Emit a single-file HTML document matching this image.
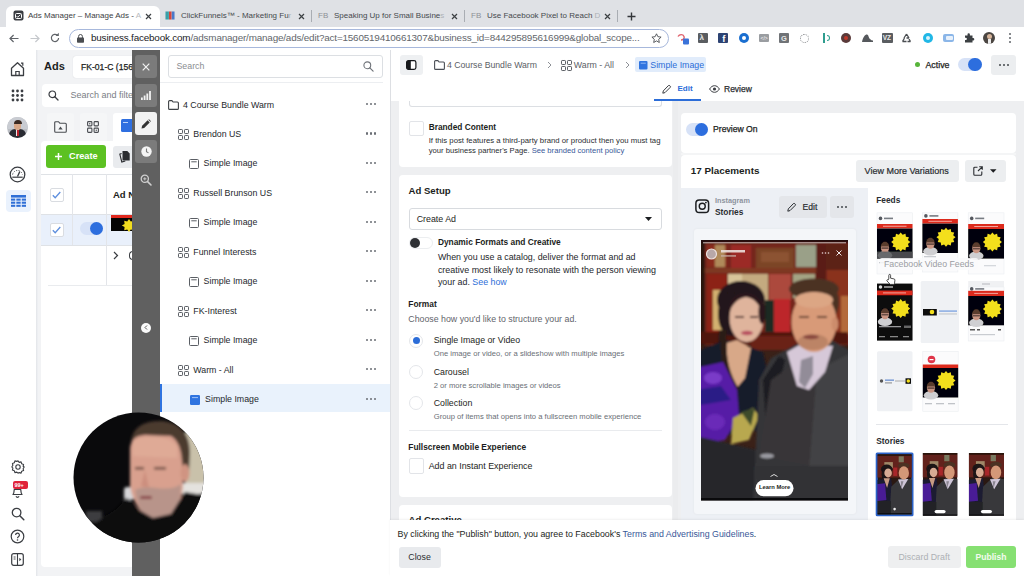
<!DOCTYPE html>
<html><head><meta charset="utf-8">
<style>
*{box-sizing:border-box;margin:0;padding:0}
html,body{width:1024px;height:576px;overflow:hidden;background:#fff}
body{font-family:"Liberation Sans",sans-serif;font-size:9px;color:#1c1e21;position:relative}
.a{position:absolute}
.t{position:absolute;white-space:nowrap;line-height:1}
.b{font-weight:bold}
svg{position:absolute;overflow:visible}
/* chrome */
#tabbar{left:0;top:0;width:1024px;height:26.500px;background:#dfe1e5}
#acttab{left:6px;top:6px;width:154px;height:22px;background:#fff;border-radius:6px 6px 0 0}
#toolbar{left:0;top:27px;width:1024px;height:23px;background:#fff}
#pill{left:69px;top:29px;width:599.500px;height:19px;border-radius:10px;background:#fff;border:1.500px solid #a7b8dc}
.tabt{font-size:8px;color:#45494d;top:12px}
.sep{width:1px;height:12px;top:10px;background:#a9adb3}
/* fb */
#leftnav{left:0;top:50px;width:36px;height:526px;background:#fff}
#adspanel{left:36px;top:50px;width:96px;height:526px;background:#f2f3f5}
#dark{left:132px;top:50px;width:28px;height:526px;background:#606060}
#tree{left:160px;top:50px;width:230px;height:526px;background:#fff}
#main{left:390px;top:50px;width:634px;height:526px;background:#eeeff1}
#mainhead{left:390px;top:50px;width:634px;height:51px;background:#fff}
.card{background:#fff;border-radius:4px}
.row{left:160px;width:230px;height:29px}
.dots{font-size:9px;letter-spacing:.5px;color:#606770;font-weight:bold}
.g{color:#606770}
.btn{background:#e4e6eb;border-radius:3px}
</style></head><body>
<!-- ===== CHROME ===== -->
<div id="tabbar" class="a"></div>
<div id="acttab" class="a"></div>
<div id="toolbar" class="a"></div>
<div id="pill" class="a"></div>
<!-- ===== FB LAYOUT ===== -->
<div id="leftnav" class="a"></div>
<div id="adspanel" class="a"></div>
<div id="tree" class="a"></div>
<div id="main" class="a"></div>
<div id="mainhead" class="a"></div>

<!-- tabs -->
<svg class="a" style="left:13px;top:10px" width="11" height="11" viewBox="0 0 11 11"><rect x="0.5" y="0.5" width="10" height="10" rx="2" fill="#3a3d42"/><rect x="2.5" y="3.5" width="6" height="5" rx="1" fill="none" stroke="#fff" stroke-width="1"/><path d="M3.5 6l1.2 1.2L7.5 4.6" stroke="#fff" stroke-width=".9" fill="none"/></svg>
<div class="t tabt" style="left:28px;color:#3c4043">Ads Manager – Manage Ads - <span style="color:#b8bbc0">A</span></div>
<svg style="left:145px;top:13px" width="7" height="7" viewBox="0 0 7 7"><path d="M1 1l5 5M6 1L1 6" stroke="#3c4043" stroke-width="1.2"/></svg>
<svg style="left:165px;top:11px" width="10" height="9" viewBox="0 0 10 9"><rect width="10" height="9" rx="1" fill="#d9dde3"/><rect x=".5" y=".5" width="3.4" height="8" fill="#3aa0a8"/><rect x="4" y=".5" width="2.6" height="8" fill="#d8453c"/><rect x="6.8" y=".5" width="2.7" height="8" fill="#4a79c9"/></svg>
<div class="t tabt" style="left:181px">ClickFunnels™ - Marketing Fu<span style="color:#aeb1b6">r</span></div>
<svg style="left:298px;top:13px" width="7" height="7" viewBox="0 0 7 7"><path d="M1 1l5 5M6 1L1 6" stroke="#3c4043" stroke-width="1.2"/></svg>
<div class="a sep" style="left:311px"></div>
<div class="t tabt" style="left:318px;color:#8d9096">FB</div>
<div class="t tabt" style="left:334px">Speaking Up for Small Busine<span style="color:#aeb1b6">s</span></div>
<svg style="left:451px;top:13px" width="7" height="7" viewBox="0 0 7 7"><path d="M1 1l5 5M6 1L1 6" stroke="#3c4043" stroke-width="1.2"/></svg>
<div class="a sep" style="left:464px"></div>
<div class="t tabt" style="left:471px;color:#8d9096">FB</div>
<div class="t tabt" style="left:487px">Use Facebook Pixel to Reach <span style="color:#aeb1b6">D</span></div>
<svg style="left:604px;top:13px" width="7" height="7" viewBox="0 0 7 7"><path d="M1 1l5 5M6 1L1 6" stroke="#3c4043" stroke-width="1.2"/></svg>
<div class="a sep" style="left:617px"></div>
<svg style="left:627px;top:12px" width="9" height="9" viewBox="0 0 9 9"><path d="M4.5 0.5v8M0.5 4.5h8" stroke="#33363a" stroke-width="1.4"/></svg>
<!-- toolbar -->
<svg style="left:9px;top:34px" width="10" height="9" viewBox="0 0 10 9"><path d="M9.5 4.5H1.2M4.6 1L1 4.5 4.6 8" stroke="#5f6368" stroke-width="1.2" fill="none"/></svg>
<svg style="left:30px;top:34px" width="10" height="9" viewBox="0 0 10 9"><path d="M.5 4.5h8.3M5.4 1L9 4.5 5.4 8" stroke="#c5c8cc" stroke-width="1.2" fill="none"/></svg>
<svg style="left:50px;top:33px" width="10" height="10" viewBox="0 0 10 10"><path d="M8.6 5A3.6 3.6 0 1 1 7.4 2.3" stroke="#5f6368" stroke-width="1.2" fill="none"/><path d="M5.6 2.9h3.2V-.2z" fill="#5f6368"/></svg>
<svg style="left:77px;top:34px" width="7" height="9" viewBox="0 0 7 9"><rect x="0" y="3.6" width="7" height="5.2" rx=".8" fill="#4a4d51"/><path d="M1.6 4V2.4a1.9 1.9 0 0 1 3.8 0V4" stroke="#4a4d51" stroke-width="1" fill="none"/></svg>
<div class="t" style="left:91px;top:33px;font-size:9.9px;letter-spacing:-.18px;color:#202124">business.facebook.com<span style="color:#62666b">/adsmanager/manage/ads/edit?act=1560519410661307&amp;business_id=844295895616999&amp;global_scope...</span></div>
<svg style="left:651px;top:33px" width="11" height="10" viewBox="0 0 11 10"><path d="M5.5.8l1.4 2.9 3.2.4-2.4 2.2.6 3.2-2.8-1.6-2.8 1.6.6-3.2L.9 4.100l3.200-.4z" stroke="#4a4d51" stroke-width=".9" fill="none" stroke-linejoin="round"/></svg>
<!-- extensions -->
<svg style="left:677px;top:32px" width="13" height="13" viewBox="0 0 13 13"><path d="M1 4.500c1.500-2.500 5-2.500 6 0 .800 2-1 3.500-3 3.500" stroke="#e0606b" stroke-width="1.400" fill="none"/><rect x="6" y="6.500" width="6" height="6" rx="1" fill="#3b73d9"/></svg>
<div class="a" style="left:697.5px;top:33px;width:10px;height:10px;background:#5a5d61;border-radius:1px"></div>
<div class="t b" style="left:699.5px;top:34px;font-size:8px;color:#e8e8e8">λ</div>
<div class="a" style="left:718.3px;top:33px;width:10px;height:10px;background:#2d4373;border-radius:1px"></div>
<div class="t b" style="left:722.3px;top:34px;font-size:9.500px;color:#fff">f</div>
<div class="a" style="left:739px;top:33px;width:10px;height:10px;background:#1a6ed0;border-radius:5px"></div>
<div class="a" style="left:742px;top:36px;width:4px;height:4px;background:#fff;border-radius:2px"></div>
<div class="a" style="left:759px;top:34px;width:10px;height:8px;background:#9a9da1;border-radius:1px"></div>
<div class="t" style="left:760.500px;top:35.500px;font-size:5px;color:#fff">&lt;/&gt;</div>
<div class="a" style="left:779px;top:33px;width:10px;height:10px;background:#707377;border-radius:1px"></div>
<div class="t b" style="left:781px;top:34.500px;font-size:7.500px;color:#e8e8e8">G</div>
<div class="a" style="left:800px;top:33.500px;width:9px;height:9px;border:1.500px dotted #84878b;border-radius:5px"></div>
<div class="a" style="left:822.6px;top:33px;width:2px;height:10px;background:#2f9d8f"></div>
<div class="a" style="left:826.6px;top:35px;width:3px;height:6px;border:1.300px solid #2f9d8f;border-left:0;border-radius:0 3px 3px 0"></div>
<div class="a" style="left:840.7px;top:33px;width:10px;height:10px;background:#5a3a3a;border-radius:5px"></div>
<div class="a" style="left:843.7px;top:36px;width:4px;height:4px;background:#c0392b;border-radius:2px"></div>
<svg style="left:861.5px;top:34px" width="11" height="9" viewBox="0 0 11 9"><path d="M0 8c1-5 3-7.500 5-7.500 1.500 0 1.500 3 3 4.500 1 1 2 1.500 3 1.500v1.500z" fill="#55585c"/></svg>
<div class="a" style="left:881.7px;top:33px;width:11px;height:10px;background:#5a5d61;border-radius:1px"></div>
<div class="t b" style="left:882.7px;top:35px;font-size:6.500px;color:#eee">VZ</div>
<svg style="left:901.4px;top:33px" width="11" height="10" viewBox="0 0 11 10"><path d="M5.500 1L8 5M8 5h-2.500M3 5L5.500 1M1.500 8.500h4M9.500 8.500h-3M1.500 8.500L3.500 5M9.500 8.500L8 6" stroke="#4a4d51" stroke-width="1.300" fill="none"/></svg>
<div class="a" style="left:922.5px;top:33px;width:10px;height:10px;background:#21b7e6;border-radius:5px"></div>
<div class="a" style="left:925.5px;top:36px;width:4px;height:4px;background:#d8f3fb;border-radius:2px"></div>
<div class="a" style="left:942.5px;top:34px;width:11px;height:8px;background:#8bb6e8;border-radius:2px"></div>
<div class="a" style="left:945.5px;top:36px;width:7px;height:4px;background:#e8f1fb;border-radius:1px"></div>
<svg style="left:963.5px;top:33px" width="10" height="10" viewBox="0 0 10 10"><path d="M3.500 1.500a1.200 1.200 0 0 1 2.400 0V2.500H8.500V5h.600a1.200 1.200 0 0 1 0 2.400H8.500V9.500H1V7h.800a1.100 1.100 0 0 0 0-2.200H1V2.500h2.500z" fill="#3c4043"/></svg>
<div class="a" style="left:983px;top:32px;width:12px;height:12px;border-radius:6px;background:#4b4642;overflow:hidden"><div class="a" style="left:3.500px;top:1.500px;width:5px;height:5px;border-radius:3px;background:#d6b49a"></div><div class="a" style="left:4.500px;top:7px;width:3px;height:5px;background:#eee"></div></div>
<div class="a" style="left:1008.8px;top:33px;width:2px;height:2px;border-radius:1px;background:#5f6368;box-shadow:0 4px 0 #5f6368,0 8px 0 #5f6368"></div>
<!--CHROME-CONTENT-->

<div class="a" style="left:36px;top:50px;width:2px;height:526px;background:linear-gradient(90deg,#e2e4e8,#f0f2f5)"></div>
<!-- home -->
<svg style="left:10px;top:61px" width="15" height="16" viewBox="0 0 15 16"><path d="M1.500 7.200L7.500 1.800l6 5.400v7.300H1.500z" fill="none" stroke="#3a3d42" stroke-width="1.300" stroke-linejoin="round"/><path d="M5.800 14.500v-4h3.400v4" fill="none" stroke="#3a3d42" stroke-width="1.200"/><path d="M11 2.200h1.800v2.600" fill="none" stroke="#3a3d42" stroke-width="1.200"/></svg>
<!-- grid dots -->
<svg style="left:11px;top:89px" width="13" height="13" viewBox="0 0 13 13"><g fill="#3a3d42"><circle cx="2" cy="2" r="1.400"/><circle cx="6.500" cy="2" r="1.400"/><circle cx="11" cy="2" r="1.400"/><circle cx="2" cy="6.500" r="1.400"/><circle cx="6.500" cy="6.500" r="1.400"/><circle cx="11" cy="6.500" r="1.400"/><circle cx="2" cy="11" r="1.400"/><circle cx="6.500" cy="11" r="1.400"/><circle cx="11" cy="11" r="1.400"/></g></svg>
<!-- avatar -->
<div class="a" style="left:7px;top:117px;width:21px;height:21px;border-radius:11px;overflow:hidden;background:#b9bcc2">
 <div class="a" style="left:0;top:0;width:21px;height:12px;background:#c9ccd2"></div>
 <div class="a" style="left:2px;top:12px;width:17px;height:12px;border-radius:6px 6px 0 0;background:#2a2c33"></div>
 <div class="a" style="left:9px;top:12px;width:3px;height:7px;background:#e8e8ea"></div>
 <div class="a" style="left:10px;top:13px;width:1.500px;height:6px;background:#b8202a"></div>
 <div class="a" style="left:7px;top:4px;width:7px;height:9px;border-radius:4px;background:#d9a888"></div>
 <div class="a" style="left:6.500px;top:3px;width:8px;height:4px;border-radius:4px 4px 0 0;background:#3a2a22"></div>
</div>
<!-- gauge -->
<svg style="left:9px;top:165.500px" width="17" height="17" viewBox="0 0 17 17"><circle cx="8.500" cy="8.500" r="7.300" fill="none" stroke="#3a3d42" stroke-width="1.300"/><path d="M3.300 11.200h10.400" stroke="#3a3d42" stroke-width="1.200"/><path d="M8.500 10.500L10.800 5.600" stroke="#3a3d42" stroke-width="1.300"/><path d="M3.600 8.500a5 5 0 0 1 9.800 0" fill="none" stroke="#3a3d42" stroke-width="1" stroke-dasharray="1.200 1.400"/></svg>
<!-- table active -->
<div class="a" style="left:6px;top:189.500px;width:25px;height:22.500px;border-radius:4px;background:#eaf2fd"></div>
<svg style="left:11px;top:194.700px" width="15" height="12" viewBox="0 0 16 14" preserveAspectRatio="none"><g fill="#2f6fd6"><rect x="0" y="0" width="16" height="3"/><rect x="0" y="4.200" width="4.500" height="2.400"/><rect x="5.700" y="4.200" width="4.600" height="2.400"/><rect x="11.500" y="4.200" width="4.500" height="2.400"/><rect x="0" y="7.800" width="4.500" height="2.400"/><rect x="5.700" y="7.800" width="4.600" height="2.400"/><rect x="11.500" y="7.800" width="4.500" height="2.400"/><rect x="0" y="11.400" width="4.500" height="2.400"/><rect x="5.700" y="11.400" width="4.600" height="2.400"/><rect x="11.500" y="11.400" width="4.500" height="2.400"/></g></svg>
<!-- gear -->
<svg style="left:11px;top:460px" width="14" height="14" viewBox="0 0 14 14"><circle cx="7" cy="7" r="2.200" fill="none" stroke="#3a3d42" stroke-width="1.100"/><path d="M7 .800l1.200 1.600 1.900-.500.600 1.900 1.900.600-.500 1.900L13.200 7l-1.100 1.700.500 1.900-1.900.600-.600 1.900-1.900-.500L7 13.200l-1.200-1.100-1.900.500-.600-1.900-1.900-.600.500-1.900L.800 7l1.100-1.700-.500-1.900 1.900-.600.600-1.900 1.900.500z" fill="none" stroke="#3a3d42" stroke-width="1.100" stroke-linejoin="round"/></svg>
<!-- bell -->
<svg style="left:11px;top:486px" width="13" height="12" viewBox="0 0 13 12"><path d="M2 8.500c1.200-1 1-3 1.200-5h6.600c.200 2 0 4 1.200 5z" fill="none" stroke="#3a3d42" stroke-width="1.200" stroke-linejoin="round"/><path d="M5 10.300a1.600 1.600 0 0 0 3 0" fill="none" stroke="#3a3d42" stroke-width="1.100"/></svg>
<div class="a" style="left:13px;top:481px;width:15px;height:8px;border-radius:2px;background:#e0243a"></div>
<div class="t b" style="left:14.500px;top:482.500px;font-size:5.500px;color:#fff">99+</div>
<!-- search -->
<svg style="left:11px;top:507px" width="14" height="14" viewBox="0 0 14 14"><circle cx="5.600" cy="5.600" r="4.300" fill="none" stroke="#3a3d42" stroke-width="1.300"/><path d="M8.800 8.800l4 4" stroke="#3a3d42" stroke-width="1.500" stroke-linecap="round"/></svg>
<!-- help -->
<svg style="left:10px;top:529px" width="15" height="15" viewBox="0 0 15 15"><circle cx="7.500" cy="7.500" r="6.300" fill="none" stroke="#3a3d42" stroke-width="1.200"/><path d="M5.600 6a1.900 1.900 0 1 1 2.800 1.700c-.600.400-.900.700-.900 1.500" fill="none" stroke="#3a3d42" stroke-width="1.200"/><circle cx="7.500" cy="11" r=".800" fill="#3a3d42"/></svg>
<!-- panel -->
<svg style="left:11px;top:553px" width="13" height="13" viewBox="0 0 13 13"><rect x=".700" y=".700" width="11.600" height="11.600" rx="2" fill="none" stroke="#3a3d42" stroke-width="1.200"/><path d="M6.500 1v11" stroke="#3a3d42" stroke-width="1.100"/><path d="M8.300 4.800l2 1.700-2 1.700z" fill="#3a3d42"/><path d="M2.600 4h2M2.600 6h2" stroke="#3a3d42" stroke-width=".900"/></svg>


<div class="t b" style="left:44px;top:61px;font-size:11px;color:#1c1e21">Ads</div>
<div class="a" style="left:73px;top:56px;width:62px;height:22px;border-radius:3px;background:#fff;box-shadow:0 0 1px #c8ccd2"></div>
<div class="t" style="left:81px;top:62.500px;font-size:8.600px;color:#1c1e21;-webkit-text-stroke:.250px #1c1e21">FK-01-C (156</div>
<div class="a" style="left:42px;top:84px;width:94px;height:23px;border-radius:4px;background:#fff"></div>
<svg style="left:48px;top:90px" width="11" height="11" viewBox="0 0 11 11"><circle cx="4.300" cy="4.300" r="3.300" fill="none" stroke="#3a3d42" stroke-width="1.200"/><path d="M6.800 6.800l3.200 3.200" stroke="#3a3d42" stroke-width="1.300" stroke-linecap="round"/></svg>
<div class="t" style="left:70.500px;top:91px;font-size:9px;color:#7a7e85">Search and filte</div>
<!-- tab row -->
<div class="a" style="left:47px;top:113px;width:27px;height:29px;border-radius:3px 3px 0 0;background:#f5f6f7"></div>
<div class="a" style="left:80px;top:113px;width:27px;height:29px;border-radius:3px 3px 0 0;background:#f5f6f7"></div>
<div class="a" style="left:113px;top:113px;width:27px;height:29px;border-radius:3px 3px 0 0;background:#fff"></div>
<svg style="left:54px;top:121px" width="13" height="12" viewBox="0 0 13 12"><path d="M.700 1.700a1 1 0 0 1 1-1h2.800l1.300 1.500h5.500a1 1 0 0 1 1 1v7a1 1 0 0 1-1 1H1.700a1 1 0 0 1-1-1z" fill="none" stroke="#4a4d52" stroke-width="1.100"/><path d="M4.300 8.500h4.400L6.500 5.500z" fill="#4a4d52"/></svg>
<svg style="left:87px;top:121px" width="12" height="12" viewBox="0 0 12 12"><g fill="none" stroke="#4a4d52" stroke-width="1.100"><rect x=".600" y=".600" width="4.300" height="4.300" rx=".800"/><rect x="7.100" y=".600" width="4.300" height="4.300" rx=".800"/><rect x=".600" y="7.100" width="4.300" height="4.300" rx=".800"/><rect x="7.100" y="7.100" width="4.300" height="4.300" rx=".800"/></g><circle cx="2.750" cy="2.750" r=".700" fill="#4a4d52"/><circle cx="9.250" cy="9.250" r=".700" fill="#4a4d52"/></svg>
<div class="a" style="left:121px;top:119px;width:14px;height:13px;border-radius:1.500px;background:#2f6fe0"></div>
<div class="a" style="left:123px;top:121.500px;width:5px;height:1.200px;background:#bcd3fa"></div>
<!-- white card -->
<div class="a" style="left:41px;top:141px;width:95px;height:425.500px;border-radius:4px;background:#fff"></div>
<div class="a" style="left:46px;top:145px;width:60px;height:23px;border-radius:3px;background:#5cc122"></div>
<svg style="left:55px;top:153px" width="7" height="7" viewBox="0 0 7 7"><path d="M3.500 0v7M0 3.500h7" stroke="#fff" stroke-width="1.500"/></svg>
<div class="t b" style="left:69px;top:152px;font-size:9.200px;color:#fff">Create</div>
<div class="a" style="left:113px;top:146px;width:24px;height:22px;border-radius:3px;background:#e9ebee"></div>
<svg style="left:119px;top:151px" width="11" height="12" viewBox="0 0 11 12"><path d="M3.500 0h4.800l2.400 2.400v7H3.500z" fill="#2b2d31"/><path d="M2.600 2.500L.800 3.200l2 7.800 3.500-1" fill="none" stroke="#2b2d31" stroke-width="1.100"/></svg>
<!-- table -->
<div class="a" style="left:41px;top:173.500px;width:95px;height:1px;background:#dfe2e6"></div>
<div class="a" style="left:41px;top:214px;width:95px;height:31px;background:#e9f0fb"></div>
<div class="a" style="left:41px;top:214px;width:95px;height:1px;background:#dfe2e6"></div>
<div class="a" style="left:41px;top:244.500px;width:95px;height:1px;background:#dfe2e6"></div>
<div class="a" style="left:71.500px;top:174px;width:1px;height:71px;background:#e3e5e9"></div>
<div class="a" style="left:105.500px;top:174px;width:1px;height:111px;background:#e3e5e9"></div>
<div class="a" style="left:48px;top:285px;width:88px;height:1px;background:#e9ebee"></div>
<div class="a" style="left:49.500px;top:188px;width:14px;height:14px;border-radius:2px;background:#fff;border:1px solid #d9dce1"></div>
<svg style="left:52px;top:191px" width="9" height="8" viewBox="0 0 9 8"><path d="M.800 4.200l2.400 2.600L8.300 1" stroke="#5e8fde" stroke-width="1.300" fill="none"/></svg>
<div class="a" style="left:49.500px;top:223px;width:14px;height:14px;border-radius:2px;background:#fff;border:1px solid #d9dce1"></div>
<svg style="left:52px;top:226px" width="9" height="8" viewBox="0 0 9 8"><path d="M.800 4.200l2.400 2.600L8.300 1" stroke="#5e8fde" stroke-width="1.300" fill="none"/></svg>
<div class="t b" style="left:113px;top:190px;font-size:9.500px">Ad N</div>
<div class="a" style="left:80px;top:222px;width:23px;height:13px;border-radius:7px;background:#d7e2f7"></div>
<div class="a" style="left:90px;top:222px;width:13px;height:13px;border-radius:7px;background:#2d6ede"></div>
<div class="a" style="left:111px;top:215px;width:25px;height:16px;background:#050505"></div>
<div class="a" style="left:111px;top:215px;width:25px;height:3px;background:#e0281e"></div>
<svg style="left:122px;top:219px" width="14" height="13" viewBox="0 0 14 13"><path d="M7 0l1.800 2.600 3-.800-.400 3.100 2.800 1.600-2.800 1.600.400 3.100-3-.800L7 13l-1.800-2.600-3 .800.400-3.100L-.200 6.500l2.800-1.600-.400-3.100 3 .800z" fill="#f1dc1f"/></svg>
<svg style="left:113px;top:251px" width="6" height="9" viewBox="0 0 6 9"><path d="M1 1l3.500 3.500L1 8" stroke="#3a3d42" stroke-width="1.200" fill="none"/></svg>
<div class="a" style="left:129px;top:251px;width:6px;height:9px;border-radius:4px 0 0 4px;border:1.300px solid #3a3d42;border-right:0"></div>


<div id="dark" class="a"></div>
<div class="a" style="left:135px;top:55px;width:22px;height:23px;border-radius:3px;background:#7b7b7b"></div>
<svg style="left:142px;top:62.500px" width="8" height="8" viewBox="0 0 8 8"><path d="M.700 .700l6.600 6.600M7.300 .700L.700 7.300" stroke="#f2f2f2" stroke-width="1.200"/></svg>
<div class="a" style="left:135px;top:84px;width:22px;height:23px;border-radius:3px;background:#7b7b7b"></div>
<svg style="left:141px;top:91px" width="10" height="9" viewBox="0 0 10 9"><g fill="#f2f2f2"><rect x="0" y="6.500" width="1.800" height="2.500"/><rect x="2.700" y="4.500" width="1.800" height="4.500"/><rect x="5.400" y="2.500" width="1.800" height="6.500"/><rect x="8.100" y="0" width="1.800" height="9"/></g></svg>
<div class="a" style="left:135px;top:112px;width:22px;height:23px;border-radius:3px;background:#f2f2f2"></div>
<svg style="left:141px;top:118.500px" width="10" height="10" viewBox="0 0 10 10"><path d="M.500 9.500l.600-2.700L6.600 1.300l2.100 2.100L3.200 8.900z" fill="#333"/><path d="M7.300 .700l.700-.500 2 2-.600.600z" fill="#333"/></svg>
<div class="a" style="left:135px;top:140px;width:22px;height:23px;border-radius:3px;background:#7b7b7b"></div>
<svg style="left:140.500px;top:146px" width="11" height="11" viewBox="0 0 11 11"><circle cx="5.500" cy="5.500" r="5.200" fill="#f4f4f4"/><path d="M5.500 2.500v3.200l2 1.200" stroke="#7b7b7b" stroke-width="1.100" fill="none"/></svg>
<svg style="left:140px;top:174px" width="12" height="12" viewBox="0 0 12 12"><circle cx="4.800" cy="4.800" r="3.600" fill="none" stroke="#d0d0d0" stroke-width="1.300"/><path d="M7.600 7.600l3.400 3.400" stroke="#d0d0d0" stroke-width="1.600" stroke-linecap="round"/><path d="M3.200 4.800h3.200M4.800 3.200v3.200" stroke="#d0d0d0" stroke-width=".900"/></svg>
<div class="a" style="left:141px;top:322.500px;width:10px;height:10px;border-radius:5px;background:#fafafa"></div>
<svg style="left:144px;top:325px" width="4" height="5" viewBox="0 0 4 5"><path d="M3 .500L1 2.500 3 4.500" stroke="#555" stroke-width="1" fill="none"/></svg>


<div class="a" style="left:389.500px;top:50px;width:1px;height:526px;background:#dddfe3"></div>
<div class="a" style="left:168px;top:55px;width:215px;height:23px;border:1px solid #dcdfe3;border-radius:3px;background:#fff"></div>
<div class="t" style="left:176.500px;top:62px;font-size:8.800px;color:#8a8d91">Search</div>
<svg style="left:363px;top:61px" width="11" height="11" viewBox="0 0 11 11"><circle cx="4.300" cy="4.300" r="3.400" fill="none" stroke="#70747a" stroke-width="1.100"/><path d="M6.800 6.800l3.300 3.300" stroke="#70747a" stroke-width="1.200" stroke-linecap="round"/></svg>
<div class="a" style="left:160px;top:81.500px;width:223px;height:1px;background:#eceef1"></div>
<svg style="left:167.5px;top:100px" width="11" height="10" viewBox="0 0 11 10"><path d="M.600 1.600a1 1 0 0 1 1-1h2.300l1.200 1.400h4.300a1 1 0 0 1 1 1v5.400a1 1 0 0 1-1 1H1.600a1 1 0 0 1-1-1z" fill="none" stroke="#3f4246" stroke-width="1.100"/></svg>
<div class="t" style="left:183px;top:100.5px;font-size:8.800px;color:#25282c">4 Course Bundle Warm</div>
<div class="a" style="left:365.500px;top:103px;width:2.200px;height:2.200px;border-radius:2px;background:#6a6e75;box-shadow:4px 0 0 #6a6e75,8px 0 0 #6a6e75"></div>
<svg style="left:177.7px;top:128.9px" width="11" height="11" viewBox="0 0 11 11"><g fill="none" stroke="#5a5e64" stroke-width="1"><rect x=".500" y=".500" width="4" height="4" rx=".700"/><rect x="6.500" y=".500" width="4" height="4" rx=".700"/><rect x=".500" y="6.500" width="4" height="4" rx=".700"/><rect x="6.500" y="6.500" width="4" height="4" rx=".700"/></g></svg>
<div class="t" style="left:193.3px;top:129.9px;font-size:8.800px;color:#25282c">Brendon US</div>
<div class="a" style="left:365.500px;top:132.4px;width:2.200px;height:2.200px;border-radius:2px;background:#6a6e75;box-shadow:4px 0 0 #6a6e75,8px 0 0 #6a6e75"></div>
<svg style="left:188.6px;top:158.5px" width="10" height="10" viewBox="0 0 10 10"><rect x=".500" y=".500" width="9" height="9" rx="1" fill="none" stroke="#5a5e64" stroke-width="1"/><path d="M2.300 2.800h5.400" stroke="#5a5e64" stroke-width="1"/></svg>
<div class="t" style="left:203.6px;top:159.0px;font-size:8.800px;color:#25282c">Simple Image</div>
<div class="a" style="left:365.500px;top:161.5px;width:2.200px;height:2.200px;border-radius:2px;background:#6a6e75;box-shadow:4px 0 0 #6a6e75,8px 0 0 #6a6e75"></div>
<svg style="left:177.7px;top:187.5px" width="11" height="11" viewBox="0 0 11 11"><g fill="none" stroke="#5a5e64" stroke-width="1"><rect x=".500" y=".500" width="4" height="4" rx=".700"/><rect x="6.500" y=".500" width="4" height="4" rx=".700"/><rect x=".500" y="6.500" width="4" height="4" rx=".700"/><rect x="6.500" y="6.500" width="4" height="4" rx=".700"/></g></svg>
<div class="t" style="left:193.3px;top:188.5px;font-size:8.800px;color:#25282c">Russell Brunson US</div>
<div class="a" style="left:365.500px;top:191px;width:2.200px;height:2.200px;border-radius:2px;background:#6a6e75;box-shadow:4px 0 0 #6a6e75,8px 0 0 #6a6e75"></div>
<svg style="left:188.6px;top:217.5px" width="10" height="10" viewBox="0 0 10 10"><rect x=".500" y=".500" width="9" height="9" rx="1" fill="none" stroke="#5a5e64" stroke-width="1"/><path d="M2.300 2.800h5.400" stroke="#5a5e64" stroke-width="1"/></svg>
<div class="t" style="left:203.6px;top:218.0px;font-size:8.800px;color:#25282c">Simple Image</div>
<div class="a" style="left:365.500px;top:220.5px;width:2.200px;height:2.200px;border-radius:2px;background:#6a6e75;box-shadow:4px 0 0 #6a6e75,8px 0 0 #6a6e75"></div>
<svg style="left:177.7px;top:246.5px" width="11" height="11" viewBox="0 0 11 11"><g fill="none" stroke="#5a5e64" stroke-width="1"><rect x=".500" y=".500" width="4" height="4" rx=".700"/><rect x="6.500" y=".500" width="4" height="4" rx=".700"/><rect x=".500" y="6.500" width="4" height="4" rx=".700"/><rect x="6.500" y="6.500" width="4" height="4" rx=".700"/></g></svg>
<div class="t" style="left:193.3px;top:247.5px;font-size:8.800px;color:#25282c">Funnel Interests</div>
<div class="a" style="left:365.500px;top:250px;width:2.200px;height:2.200px;border-radius:2px;background:#6a6e75;box-shadow:4px 0 0 #6a6e75,8px 0 0 #6a6e75"></div>
<svg style="left:188.6px;top:276.5px" width="10" height="10" viewBox="0 0 10 10"><rect x=".500" y=".500" width="9" height="9" rx="1" fill="none" stroke="#5a5e64" stroke-width="1"/><path d="M2.300 2.800h5.400" stroke="#5a5e64" stroke-width="1"/></svg>
<div class="t" style="left:203.6px;top:277.0px;font-size:8.800px;color:#25282c">Simple Image</div>
<div class="a" style="left:365.500px;top:279.5px;width:2.200px;height:2.200px;border-radius:2px;background:#6a6e75;box-shadow:4px 0 0 #6a6e75,8px 0 0 #6a6e75"></div>
<svg style="left:177.7px;top:305.5px" width="11" height="11" viewBox="0 0 11 11"><g fill="none" stroke="#5a5e64" stroke-width="1"><rect x=".500" y=".500" width="4" height="4" rx=".700"/><rect x="6.500" y=".500" width="4" height="4" rx=".700"/><rect x=".500" y="6.500" width="4" height="4" rx=".700"/><rect x="6.500" y="6.500" width="4" height="4" rx=".700"/></g></svg>
<div class="t" style="left:193.3px;top:306.5px;font-size:8.800px;color:#25282c">FK-Interest</div>
<div class="a" style="left:365.500px;top:309px;width:2.200px;height:2.200px;border-radius:2px;background:#6a6e75;box-shadow:4px 0 0 #6a6e75,8px 0 0 #6a6e75"></div>
<svg style="left:188.6px;top:335.5px" width="10" height="10" viewBox="0 0 10 10"><rect x=".500" y=".500" width="9" height="9" rx="1" fill="none" stroke="#5a5e64" stroke-width="1"/><path d="M2.300 2.800h5.400" stroke="#5a5e64" stroke-width="1"/></svg>
<div class="t" style="left:203.6px;top:336.0px;font-size:8.800px;color:#25282c">Simple Image</div>
<div class="a" style="left:365.500px;top:338.5px;width:2.200px;height:2.200px;border-radius:2px;background:#6a6e75;box-shadow:4px 0 0 #6a6e75,8px 0 0 #6a6e75"></div>
<svg style="left:177.7px;top:364.5px" width="11" height="11" viewBox="0 0 11 11"><g fill="none" stroke="#5a5e64" stroke-width="1"><rect x=".500" y=".500" width="4" height="4" rx=".700"/><rect x="6.500" y=".500" width="4" height="4" rx=".700"/><rect x=".500" y="6.500" width="4" height="4" rx=".700"/><rect x="6.500" y="6.500" width="4" height="4" rx=".700"/></g></svg>
<div class="t" style="left:193.3px;top:365.5px;font-size:8.800px;color:#25282c">Warm - All</div>
<div class="a" style="left:365.500px;top:368px;width:2.200px;height:2.200px;border-radius:2px;background:#6a6e75;box-shadow:4px 0 0 #6a6e75,8px 0 0 #6a6e75"></div>
<div class="a" style="left:160px;top:384px;width:229.500px;height:28px;background:#e9f2fc"></div>
<div class="a" style="left:160px;top:384px;width:2px;height:28px;background:#2f74e0"></div>
<svg style="left:190.1px;top:394.5px" width="10" height="10" viewBox="0 0 10 10"><rect x="0" y="0" width="10" height="10" rx="1.300" fill="#2f74e0"/><path d="M2 2.600h6" stroke="#9ec0f5" stroke-width="1"/></svg>
<div class="t" style="left:205.1px;top:395.0px;font-size:8.800px;color:#25282c">Simple Image</div>
<div class="a" style="left:365.500px;top:397.5px;width:2.200px;height:2.200px;border-radius:2px;background:#6a6e75;box-shadow:4px 0 0 #6a6e75,8px 0 0 #6a6e75"></div>


<div class="a" style="left:399.500px;top:55px;width:23px;height:19.500px;border-radius:3px;background:#eef0f2"></div>
<svg style="left:405.500px;top:59.500px" width="10.500" height="10" viewBox="0 0 10.500 10"><rect x=".600" y=".600" width="9.300" height="8.800" rx="1.800" fill="#fff" stroke="#15171a" stroke-width="1.200"/><path d="M.600 2.400a1.800 1.800 0 0 1 1.800-1.800h2.400v8.800H2.400a1.800 1.800 0 0 1-1.800-1.800z" fill="#15171a"/></svg>
<svg style="left:433.500px;top:59.500px" width="11" height="10" viewBox="0 0 11 10"><path d="M.600 1.600a1 1 0 0 1 1-1h2.300l1.200 1.400h4.300a1 1 0 0 1 1 1v5.400a1 1 0 0 1-1 1H1.600a1 1 0 0 1-1-1z" fill="none" stroke="#4b4f56" stroke-width="1.100"/></svg>
<div class="t" style="left:447px;top:60.500px;font-size:8.700px;color:#5a5e65">4 Course Bundle Warm</div>
<svg style="left:547px;top:61px" width="5" height="8" viewBox="0 0 5 8"><path d="M1 1l3 3-3 3" stroke="#8d9096" stroke-width="1" fill="none"/></svg>
<svg style="left:560.500px;top:59.500px" width="11" height="11" viewBox="0 0 11 11"><g fill="none" stroke="#5a5e64" stroke-width="1"><rect x=".500" y=".500" width="4" height="4" rx=".700"/><rect x="6.500" y=".500" width="4" height="4" rx=".700"/><rect x=".500" y="6.500" width="4" height="4" rx=".700"/><rect x="6.500" y="6.500" width="4" height="4" rx=".700"/></g></svg>
<div class="t" style="left:573.800px;top:60.500px;font-size:8.800px;color:#5a5e65">Warm - All</div>
<svg style="left:624.500px;top:61px" width="5" height="8" viewBox="0 0 5 8"><path d="M1 1l3 3-3 3" stroke="#8d9096" stroke-width="1" fill="none"/></svg>
<div class="a" style="left:634.500px;top:57px;width:71.500px;height:15px;border-radius:2px;background:#e1ecfb"></div>
<svg style="left:638.500px;top:60.500px" width="8.500" height="8.500" viewBox="0 0 10 10"><rect x="0" y="0" width="10" height="10" rx="1.300" fill="#2f74e0"/><path d="M2 2.600h6" stroke="#9ec0f5" stroke-width="1"/></svg>
<div class="t" style="left:650.300px;top:60.500px;font-size:8.800px;color:#2c6dd8">Simple Image</div>
<!-- tabs -->
<svg style="left:662px;top:84px" width="9" height="10" viewBox="0 0 9 10"><path d="M.800 9.200l.500-2.300L6.300 1.700a1 1 0 0 1 1.500 0l.300.300a1 1 0 0 1 0 1.500L3 8.600z" fill="none" stroke="#3a3d42" stroke-width="1"/></svg>
<div class="t b" style="left:677.500px;top:85px;font-size:8px;color:#2c6dd8">Edit</div>
<div class="a" style="left:654px;top:98.500px;width:47px;height:2.500px;background:#2c6dd8"></div>
<svg style="left:708.500px;top:85px" width="11" height="8" viewBox="0 0 11 8"><path d="M.600 4c1.300-2.200 3-3.300 4.900-3.300s3.600 1.100 4.900 3.300c-1.300 2.200-3 3.300-4.900 3.300S1.900 6.200.600 4z" fill="none" stroke="#3a3d42" stroke-width="1"/><circle cx="5.500" cy="4" r="1.600" fill="#3a3d42"/></svg>
<div class="t" style="left:724px;top:85px;font-size:8.500px;color:#2a2d31;-webkit-text-stroke:.250px #2a2d31">Review</div>
<!-- status -->
<div class="a" style="left:914.500px;top:62px;width:5px;height:5px;border-radius:3px;background:#57b53a"></div>
<div class="t" style="left:925.500px;top:60.500px;font-size:8.800px;color:#1c1e21;-webkit-text-stroke:.250px #1c1e21">Active</div>
<div class="a" style="left:958px;top:58px;width:24px;height:13px;border-radius:7px;background:#d7e2f7"></div>
<div class="a" style="left:968px;top:58px;width:13.500px;height:13px;border-radius:7px;background:#2d6ede"></div>
<div class="a" style="left:991px;top:55px;width:25px;height:20px;border-radius:3px;background:#eceef0"></div>
<div class="a" style="left:998.500px;top:64px;width:2.200px;height:2.200px;border-radius:2px;background:#45484d;box-shadow:4px 0 0 #45484d,8px 0 0 #45484d"></div>


<!-- card 1 -->
<div class="a card" style="left:398.500px;top:101px;width:273px;height:65.500px;border-radius:0 0 4px 4px"></div>
<div class="a" style="left:408.500px;top:101px;width:253px;height:6px;border:1px solid #dcdfe3;border-top:0;border-radius:0 0 3px 3px"></div>
<div class="a" style="left:408.500px;top:121px;width:15px;height:15px;border:1px solid #e2e4e8;border-radius:2px;background:#fff"></div>
<div class="t b" style="left:428.700px;top:122.500px;font-size:8.300px">Branded Content</div>
<div class="t" style="left:428.700px;top:136.500px;font-size:7.750px;color:#2a2d31">If this post features a third-party brand or product then you must tag</div>
<div class="t" style="left:428.700px;top:147px;font-size:7.650px;color:#2a2d31">your business partner's Page. <span style="color:#385898">See branded content policy</span></div>
<!-- card 2 -->
<div class="a card" style="left:398.500px;top:174.500px;width:273px;height:322px"></div>
<div class="t b" style="left:408.500px;top:185.500px;font-size:9.600px">Ad Setup</div>
<div class="a" style="left:408.500px;top:207.500px;width:253px;height:22px;border:1px solid #d8dbdf;border-radius:3px;background:#fff"></div>
<div class="t" style="left:416.700px;top:214.500px;font-size:8.850px">Create Ad</div>
<svg style="left:644.500px;top:217px" width="7" height="4" viewBox="0 0 7 4"><path d="M0 0h7L3.500 4z" fill="#1c1e21"/></svg>
<div class="a" style="left:408.500px;top:236.500px;width:24px;height:12px;border-radius:6px;background:#fff;border:1px solid #eceef0"></div>
<div class="a" style="left:410px;top:237.500px;width:10px;height:10px;border-radius:5px;background:#2f3135"></div>
<div class="t b" style="left:437.900px;top:238px;font-size:8.400px">Dynamic Formats and Creative</div>
<div class="t" style="left:437.900px;top:253px;font-size:8.850px;color:#25282c">When you use a catalog, deliver the format and ad</div>
<div class="t" style="left:437.900px;top:265.500px;font-size:8.950px;color:#25282c">creative most likely to resonate with the person viewing</div>
<div class="t" style="left:437.900px;top:278px;font-size:8.850px;color:#25282c">your ad. <span style="color:#2c6dd8">See how</span></div>
<div class="t b" style="left:408.300px;top:299.500px;font-size:8.400px">Format</div>
<div class="t" style="left:408.300px;top:314.500px;font-size:8.800px;color:#5f646b">Choose how you'd like to structure your ad.</div>
<div class="a" style="left:409px;top:333.6px;width:14px;height:14px;border-radius:7px;border:1px solid #e4e6ea;background:#fff"></div>
<div class="a" style="left:412.500px;top:337.1px;width:7px;height:7px;border-radius:4px;background:#2c6dd8"></div>
<div class="t" style="left:433.700px;top:336.1px;font-size:8.800px;color:#1c1e21">Single Image or Video</div>
<div class="t" style="left:433.700px;top:350.1px;font-size:7.650px;color:#6a6f76">One image or video, or a slideshow with multiple images</div>
<div class="a" style="left:409px;top:365px;width:14px;height:14px;border-radius:7px;border:1px solid #e4e6ea;background:#fff"></div>
<div class="t" style="left:433.700px;top:367.5px;font-size:8.800px;color:#1c1e21">Carousel</div>
<div class="t" style="left:433.700px;top:381.5px;font-size:7.650px;color:#6a6f76">2 or more scrollable images or videos</div>
<div class="a" style="left:409px;top:396.2px;width:14px;height:14px;border-radius:7px;border:1px solid #e4e6ea;background:#fff"></div>
<div class="t" style="left:433.700px;top:398.7px;font-size:8.800px;color:#1c1e21">Collection</div>
<div class="t" style="left:433.700px;top:412.7px;font-size:7.650px;color:#6a6f76">Group of items that opens into a fullscreen mobile experience</div>

<div class="a" style="left:408.500px;top:430px;width:253px;height:1px;background:#e9ebee"></div>
<div class="t b" style="left:408.300px;top:442.500px;font-size:8.400px">Fullscreen Mobile Experience</div>
<div class="a" style="left:408.500px;top:458px;width:15px;height:15.500px;border:1px solid #e2e4e8;border-radius:2px;background:#fff"></div>
<div class="t" style="left:428.700px;top:461.500px;font-size:8.850px">Add an Instant Experience</div>
<!-- card 3 -->
<div class="a card" style="left:398.500px;top:504.500px;width:273px;height:40px"></div>
<div class="t b" style="left:408.500px;top:515px;font-size:9.600px">Ad Creative</div>


<div class="a" style="left:672.500px;top:101px;width:5px;height:419px;background:#ebecee"></div>
<!-- preview card -->
<div class="a card" style="left:680.500px;top:112.500px;width:335.500px;height:40.500px"></div>
<div class="a" style="left:680.500px;top:153px;width:335.500px;height:2px;background:#f4f5f6"></div>
<div class="a" style="left:686px;top:123px;width:22px;height:12.500px;border-radius:7px;background:#d7e2f7"></div>
<div class="a" style="left:694.500px;top:122.500px;width:13.500px;height:13.500px;border-radius:7px;background:#2d6ede"></div>
<div class="t" style="left:713px;top:125px;font-size:8.650px;color:#1c1e21;-webkit-text-stroke:.250px #1c1e21">Preview On</div>
<!-- placements card -->
<div class="a card" style="left:680.500px;top:155px;width:335.500px;height:400px"></div>
<div class="t b" style="left:690.800px;top:165.500px;font-size:9.900px">17 Placements</div>
<div class="a" style="left:855.500px;top:160px;width:103.500px;height:21.500px;border-radius:3px;background:#eceef0"></div>
<div class="t" style="left:864.600px;top:166.500px;font-size:9px;color:#2a2d31;-webkit-text-stroke:.200px #2a2d31">View More Variations</div>
<div class="a" style="left:965px;top:160px;width:40.500px;height:21.500px;border-radius:3px;background:#eceef0"></div>
<svg style="left:972.500px;top:166px" width="10" height="10" viewBox="0 0 10 10"><path d="M4.500 1.200H1.800a1 1 0 0 0-1 1v6a1 1 0 0 0 1 1h6a1 1 0 0 0 1-1V5.500" fill="none" stroke="#2a2d31" stroke-width="1.100"/><path d="M5 5L9.200 .800M6.200 .700h3.100v3.100" fill="none" stroke="#2a2d31" stroke-width="1.100"/></svg>
<svg style="left:990px;top:169px" width="6.500" height="4" viewBox="0 0 7 4"><path d="M0 0h7L3.500 4z" fill="#1c1e21"/></svg>
<!-- left sub panel -->
<div class="a" style="left:680.500px;top:187.500px;width:187.500px;height:345px;background:#edf0f5"></div>
<svg style="left:695px;top:198.500px" width="14.500" height="14.500" viewBox="0 0 14.500 14.500"><rect x=".900" y=".900" width="12.700" height="12.700" rx="3.300" fill="none" stroke="#1c1e21" stroke-width="1.500"/><circle cx="7.250" cy="7.250" r="3" fill="none" stroke="#1c1e21" stroke-width="1.400"/><circle cx="10.900" cy="3.600" r=".900" fill="#1c1e21"/></svg>
<div class="t b" style="left:715px;top:197px;font-size:7.300px;color:#8d949e">Instagram</div>
<div class="t b" style="left:715px;top:207.500px;font-size:8.350px;color:#2a2d31">Stories</div>
<div class="a" style="left:779px;top:196px;width:47.500px;height:21.500px;border-radius:3px;background:#e4e6ea"></div>
<svg style="left:786.500px;top:201.500px" width="9" height="10" viewBox="0 0 9 10"><path d="M.800 9.200l.500-2.300L6.300 1.700a1 1 0 0 1 1.500 0l.300.300a1 1 0 0 1 0 1.500L3 8.600z" fill="none" stroke="#2a2d31" stroke-width="1"/></svg>
<div class="t" style="left:802.500px;top:202.500px;font-size:8.600px;color:#2a2d31;-webkit-text-stroke:.200px #2a2d31">Edit</div>
<div class="a" style="left:829.500px;top:196px;width:24px;height:21.500px;border-radius:3px;background:#e4e6ea"></div>
<div class="a" style="left:836.500px;top:206px;width:2.200px;height:2.200px;border-radius:2px;background:#45484d;box-shadow:4px 0 0 #45484d,8px 0 0 #45484d"></div>
<!-- phone -->
<div class="a" style="left:693.500px;top:229px;width:162px;height:285px;border-radius:3px;background:#f4f6f9;box-shadow:0 0 2px #dfe2e7"></div>
<svg style="left:701px;top:240px" width="147" height="260.500" viewBox="0 0 147 260.500">
<defs><filter id="bl" x="-10%" y="-10%" width="120%" height="120%"><feGaussianBlur stdDeviation="1.300"/></filter><filter id="bl2"><feGaussianBlur stdDeviation=".600"/></filter><clipPath id="pc"><rect width="147" height="260.500"/></clipPath></defs>
<g clip-path="url(#pc)">
<rect width="147" height="260.500" fill="#3a2118"/>
<g filter="url(#bl)">
 <rect x="-5" y="-5" width="160" height="110" fill="#74281a"/>
 <rect x="-5" y="-5" width="9" height="110" fill="#2a130f"/>
 <rect x="-5" y="-5" width="160" height="8" fill="#24100c"/>
 <rect x="6" y="5" width="20" height="22" fill="#8a2a1e"/>
 <rect x="14" y="5" width="10" height="22" fill="#b08a5a"/>
 <rect x="30" y="5" width="20" height="23" fill="#9c2c26"/>
 <rect x="55" y="8" width="38" height="20" fill="#7c4528"/>
 <rect x="60" y="12" width="28" height="10" fill="#8c5230"/>
 <rect x="95" y="5" width="20" height="22" fill="#9aa088"/>
 <rect x="116" y="4" width="34" height="26" fill="#5c2016"/>
 <rect x="4" y="28" width="112" height="5" fill="#7e3822"/>
 <rect x="6" y="34" width="20" height="58" fill="#8c2418"/>
 <rect x="27" y="34" width="40" height="30" fill="#c4aa80"/>
 <rect x="27" y="34" width="14" height="20" fill="#d8c49a"/>
 <rect x="12" y="50" width="10" height="40" fill="#d2b070"/>
 <rect x="68" y="34" width="22" height="26" fill="#ac4a3e"/>
 <rect x="92" y="34" width="22" height="24" fill="#a4a484"/>
 <rect x="115" y="4" width="10" height="96" fill="#5a1e14"/>
 <rect x="126" y="30" width="24" height="66" fill="#8a301c"/>
 <rect x="140" y="56" width="8" height="38" fill="#b46a3a"/>
 <rect x="64" y="60" width="9" height="34" fill="#1e2a20"/>
 <rect x="73" y="59" width="16" height="35" fill="#bc262c"/>
 <rect x="0" y="92" width="147" height="12" fill="#50180f"/>
 <rect x="50" y="96" width="50" height="14" fill="#6a2418"/>
 <!-- woman -->
 <ellipse cx="40" cy="60" rx="24" ry="19" fill="#24151a"/>
 <ellipse cx="30" cy="74" rx="13" ry="22" fill="#24151a"/>
 <path d="M18 90 q-3 30 6 52 l6 -2 q-8 -22 -4 -50z" fill="#2c1a18"/>
 <ellipse cx="45.500" cy="78" rx="17" ry="24" fill="#dfb49c"/>
 <path d="M27 74 Q28 52 46 53 Q62 54 62 74 Q56 58 45 57 Q34 58 27 74z" fill="#2a181a"/>
 <ellipse cx="61" cy="72" rx="3.500" ry="12" fill="#2a181a"/>
 <ellipse cx="46" cy="93" rx="6" ry="2.200" fill="#b85060"/>
 <rect x="34" y="76" width="9" height="2" fill="#5a3a34"/><rect x="49" y="76" width="8" height="2" fill="#5a3a34"/>
 <path d="M-5 112 L24 100 L40 104 L62 112 L70 150 L60 190 L-5 200z" fill="#191a2a"/>
 <path d="M22 104 L36 100 L50 108 L44 138 L34 150 L26 130z" fill="#d8a888"/>
 <path d="M20 100 q-2 30 14 52 l4 -3 q-14 -22 -12 -48z" fill="#2c1a18"/>
 <path d="M-5 128 L22 122 L36 150 L38 176 L24 200 L-5 204z" fill="#561ea6"/>
 <path d="M-5 150 L20 146 L30 160 L-5 166z" fill="#2c1e86"/>
 <ellipse cx="12" cy="138" rx="9" ry="6" fill="#7a3ac8"/>
 <ellipse cx="14" cy="182" rx="10" ry="8" fill="#6a2ab8"/>
 <path d="M32 178 L52 168 L58 176 L48 200 L30 204z" fill="#b8a850"/>
 <path d="M40 172 L54 168 L50 186z" fill="#3c4c2c"/>
 <path d="M-5 196 L30 204 L56 210 L62 265 L-5 265z" fill="#25272c"/>
 <!-- man -->
 <path d="M58 140 L70 118 L96 104 L130 100 L152 112 L152 265 L52 265z" fill="#343437"/>
 <path d="M62 140 L78 116 L84 120 L66 200z" fill="#1e1e22"/>
 <path d="M70 140 L92 124 L118 140 L112 226 L58 216z" fill="#393538"/>
 <path d="M116 130 L152 112 L152 250 L108 230z" fill="#424245"/>
 <path d="M86 112 L100 104 L132 106 L124 132 L108 150 L96 146z" fill="#d6c8d8"/>
 <path d="M100 120 L112 116 L112 134 L104 148 L98 142z" fill="#928c98"/>
 <ellipse cx="113" cy="49" rx="25" ry="10.500" fill="#4c3024"/>
 <ellipse cx="132" cy="62" rx="6" ry="14" fill="#4c3024"/>
 <ellipse cx="113" cy="82" rx="22.500" ry="30" fill="#d89a78"/>
 <ellipse cx="113" cy="60" rx="19" ry="8" fill="#dca684"/>
 <ellipse cx="112" cy="102" rx="15" ry="8" fill="#bc8466"/>
 <ellipse cx="110" cy="97" rx="8" ry="2.200" fill="#8a4a40"/>
 <rect x="98" y="76" width="10" height="2" fill="#6a4434"/><rect x="116" y="76" width="10" height="2" fill="#6a4434"/>
 <ellipse cx="134" cy="84" rx="3.500" ry="7" fill="#cc8c6c"/>
 <rect x="56" y="226" width="96" height="40" fill="#313136"/>
 <ellipse cx="66" cy="216" rx="7" ry="2.500" fill="#9a9aa0"/>
</g>
<rect x="2" y="2.300" width="143" height="1" fill="#e8e0dc" opacity=".850"/>
<g filter="url(#bl2)">
 <circle cx="10.500" cy="14" r="5" fill="#b8a8a8" stroke="#ece0dc" stroke-width="1.200"/>
 <rect x="20" y="10" width="24" height="2.500" fill="#ece0dc" opacity=".900"/>
 <rect x="20" y="15" width="15" height="1.800" fill="#c8b0a8" opacity=".700"/>
</g>
<path d="M135.500 10.500l5 5M140.500 10.500l-5 5" stroke="#f0e8e8" stroke-width="1" />
<circle cx="121.500" cy="13" r=".800" fill="#e8d8d8"/><circle cx="124.500" cy="13" r=".800" fill="#e8d8d8"/><circle cx="127.500" cy="13" r=".800" fill="#e8d8d8"/>
<path d="M69.500 236.500l3.500-2 3.500 2" stroke="#ddd" stroke-width="1" fill="none"/>
<rect x="54.500" y="240" width="38" height="16.300" rx="8.150" fill="#fff"/>
<rect x="0" y="258" width="147" height="2.500" fill="#0a0a0c"/>
</g></svg>
<div class="t b" style="left:759px;top:485px;font-size:5.800px;color:#1c1e21">Learn More</div>
<!-- right sub panel -->
<div class="t b" style="left:876.200px;top:196px;font-size:8.400px;color:#2a2d31">Feeds</div>
<svg style="left:0;top:0" width="1024" height="576" viewBox="0 0 1024 576"><defs><filter id="tb"><feGaussianBlur stdDeviation=".450"/></filter></defs><g filter="url(#tb)">
<rect x="877" y="212.8" width="35.5" height="61.19999999999999" fill="#fbfbfc" stroke="#eceef1" stroke-width=".600"/><circle cx="880.5" cy="218.4" r="1.800" fill="#55585e"/><rect x="884" y="217.6" width="9" height="1.600" fill="#777b82"/><rect x="877" y="224" width="35.5" height="4.5" fill="#dc2a1e"/><rect x="883" y="225.75" width="23.5" height="1" fill="#f3a59c"/><rect x="877" y="228.5" width="35.5" height="30.100000000000023" fill="#060607"/><polygon points="900.7,232.5 902.6,234.8 905.5,233.8 905.9,236.8 908.9,237.2 907.9,240.1 910.2,242.0 907.9,243.9 908.9,246.8 905.9,247.2 905.5,250.2 902.6,249.2 900.7,251.5 898.8,249.2 896.0,250.2 895.5,247.2 892.5,246.8 893.5,243.9 891.2,242.0 893.5,240.1 892.5,237.2 895.5,236.8 896.0,233.8 898.8,234.8" fill="#f3df1e"/><ellipse cx="885" cy="255.2" rx="7.199999999999999" ry="4.32" fill="#cfcfd2"/><ellipse cx="885" cy="248" rx="4.08" ry="4.8" fill="#c99583"/><path d="M880.92 246.56a4.08 4.8 0 0 1 8.16 0z" fill="#5a3c2e"/><rect x="881.4" y="247.28" width="7.199999999999999" height="1.68" fill="#40302a" opacity=".7"/><rect x="877" y="251.60000000000002" width="35.5" height="7" fill="#55575a" opacity=".850"/>
<rect x="922.4" y="212.8" width="35.5" height="59.19999999999999" fill="#fbfbfc" stroke="#eceef1" stroke-width=".600"/><circle cx="925.9" cy="215.9" r="1.800" fill="#55585e"/><rect x="929.4" y="215.1" width="9" height="1.600" fill="#777b82"/><rect x="922.4" y="219" width="35.5" height="4.599999999999994" fill="#dc2a1e"/><rect x="928.4" y="220.8" width="23.5" height="1" fill="#f3a59c"/><rect x="922.4" y="223.6" width="35.5" height="29.400000000000006" fill="#060607"/><polygon points="946.0,227.7 947.9,230.0 950.8,229.0 951.2,232.0 954.2,232.4 953.2,235.3 955.5,237.2 953.2,239.1 954.2,241.9 951.2,242.4 950.8,245.4 947.9,244.4 946.0,246.7 944.1,244.4 941.2,245.4 940.8,242.4 937.8,241.9 938.8,239.1 936.5,237.2 938.8,235.3 937.8,232.4 940.8,232.0 941.2,229.0 944.1,230.0" fill="#f3df1e"/><ellipse cx="930.4" cy="251.2" rx="7.199999999999999" ry="4.32" fill="#cfcfd2"/><ellipse cx="930.4" cy="244" rx="4.08" ry="4.8" fill="#c99583"/><path d="M926.3199999999999 242.56a4.08 4.8 0 0 1 8.16 0z" fill="#5a3c2e"/><rect x="926.8" y="243.28" width="7.199999999999999" height="1.68" fill="#40302a" opacity=".7"/>
<rect x="968.2" y="212.8" width="35.8" height="61.19999999999999" fill="#fbfbfc" stroke="#eceef1" stroke-width=".600"/><circle cx="971.7" cy="218.4" r="1.800" fill="#55585e"/><rect x="975.2" y="217.6" width="9" height="1.600" fill="#777b82"/><rect x="968.2" y="224" width="35.8" height="5" fill="#dc2a1e"/><rect x="974.2" y="226.0" width="23.799999999999997" height="1" fill="#f3a59c"/><rect x="968.2" y="229" width="35.8" height="29.600000000000023" fill="#060607"/><polygon points="992.4,232.5 994.3,234.8 997.1,233.8 997.6,236.8 1000.6,237.2 999.6,240.1 1001.9,242.0 999.6,243.9 1000.6,246.8 997.6,247.2 997.1,250.2 994.3,249.2 992.4,251.5 990.5,249.2 987.6,250.2 987.2,247.2 984.2,246.8 985.2,243.9 982.9,242.0 985.2,240.1 984.2,237.2 987.2,236.8 987.6,233.8 990.5,234.8" fill="#f3df1e"/><ellipse cx="976.3" cy="255.7" rx="7.199999999999999" ry="4.32" fill="#cfcfd2"/><ellipse cx="976.3" cy="248.5" rx="4.08" ry="4.8" fill="#c99583"/><path d="M972.2199999999999 247.06a4.08 4.8 0 0 1 8.16 0z" fill="#5a3c2e"/><rect x="972.6999999999999" y="247.78" width="7.199999999999999" height="1.68" fill="#40302a" opacity=".7"/>
<rect x="879" y="262" width="20" height="1.300" fill="#c9ccd1"/><rect x="924" y="256" width="12" height="1.300" fill="#c9ccd1"/><rect x="984" y="265" width="12" height="1.300" fill="#d5d8dc"/><rect x="877" y="283.600" width="35.500" height="57" fill="#070708"/><circle cx="880.500" cy="287" r="1.800" fill="#ddd"/><rect x="884" y="286.200" width="9" height="1.600" fill="#aaa"/><rect x="877" y="290.500" width="35.500" height="4.800" fill="#dc2a1e"/><rect x="883" y="292.400" width="23" height="1" fill="#f3a59c"/><polygon points="900.7,299.1 902.6,301.4 905.5,300.4 905.9,303.4 908.9,303.9 907.9,306.7 910.2,308.6 907.9,310.5 908.9,313.4 905.9,313.8 905.5,316.8 902.6,315.8 900.7,318.1 898.8,315.8 896.0,316.8 895.5,313.8 892.5,313.4 893.5,310.5 891.2,308.6 893.5,306.7 892.5,303.9 895.5,303.4 896.0,300.4 898.8,301.4" fill="#f3df1e"/><ellipse cx="885" cy="321.7" rx="7.199999999999999" ry="4.32" fill="#cfcfd2"/><ellipse cx="885" cy="314.5" rx="4.08" ry="4.8" fill="#c99583"/><path d="M880.92 313.06a4.08 4.8 0 0 1 8.16 0z" fill="#5a3c2e"/><rect x="881.4" y="313.78" width="7.199999999999999" height="1.68" fill="#40302a" opacity=".7"/><rect x="879" y="326" width="22" height="1.300" fill="#9a9a9c"/><rect x="904" y="325.500" width="7" height="2.500" fill="#666"/><rect x="879" y="336" width="6" height="1.300" fill="#888"/><rect x="890" y="336" width="8" height="1.300" fill="#888"/><rect x="903" y="336" width="6" height="1.300" fill="#888"/>
<rect x="920.700" y="281" width="38.300" height="62" rx="1.500" fill="#eff1f4"/><rect x="923" y="309" width="13.800" height="6.500" fill="#0a0a0c"/><circle cx="932" cy="312" r="2.300" fill="#f3df1e"/><rect x="939" y="310.300" width="18" height="1.600" fill="#8fb0e4"/><rect x="939" y="313.300" width="18" height="1.300" fill="#c9ccd1"/>
<rect x="968.200" y="281" width="35.800" height="6" fill="#f0f1f3"/><rect x="982" y="283.500" width="8" height="1" fill="#b5b8bd"/><rect x="968.2" y="287" width="35.8" height="54" fill="#fbfbfc" stroke="#eceef1" stroke-width=".600"/><circle cx="971.7" cy="288.9" r="1.800" fill="#55585e"/><rect x="975.2" y="288.09999999999997" width="9" height="1.600" fill="#777b82"/><rect x="968.2" y="290.8" width="35.8" height="5.199999999999989" fill="#dc2a1e"/><rect x="974.2" y="292.9" width="23.799999999999997" height="1" fill="#f3a59c"/><rect x="968.2" y="296" width="35.8" height="29.30000000000001" fill="#060607"/><polygon points="992.4,299.5 994.3,301.8 997.1,300.8 997.6,303.8 1000.6,304.2 999.6,307.1 1001.9,309.0 999.6,310.9 1000.6,313.8 997.6,314.2 997.1,317.2 994.3,316.2 992.4,318.5 990.5,316.2 987.6,317.2 987.2,314.2 984.2,313.8 985.2,310.9 982.9,309.0 985.2,307.1 984.2,304.2 987.2,303.8 987.6,300.8 990.5,301.8" fill="#f3df1e"/><ellipse cx="976.3" cy="322.7" rx="7.199999999999999" ry="4.32" fill="#cfcfd2"/><ellipse cx="976.3" cy="315.5" rx="4.08" ry="4.8" fill="#c99583"/><path d="M972.2199999999999 314.06a4.08 4.8 0 0 1 8.16 0z" fill="#5a3c2e"/><rect x="972.6999999999999" y="314.78" width="7.199999999999999" height="1.68" fill="#40302a" opacity=".7"/>
<rect x="970" y="329" width="5" height="1.500" fill="#555"/><rect x="977" y="329" width="3" height="1.500" fill="#555"/><rect x="998" y="329" width="3" height="1.500" fill="#555"/><rect x="970" y="334" width="25" height="1.200" fill="#c9ccd1"/>
<rect x="877" y="351.300" width="35.500" height="60" rx="1.500" fill="#eff1f4"/><circle cx="881.500" cy="381" r="1.700" fill="#555"/><rect x="885" y="379.500" width="9" height="1.300" fill="#6b8fd0"/><rect x="885" y="382.300" width="7" height="1.200" fill="#999"/><rect x="895" y="380.500" width="10" height="1" fill="#aaa"/><rect x="905.500" y="378.300" width="5.500" height="5.500" fill="#0a0a0c"/><circle cx="908.300" cy="381" r="1.800" fill="#f3df1e"/>
<rect x="922.800" y="351.300" width="35.400" height="60" fill="#fbfbfc" stroke="#eceef1" stroke-width=".600"/><circle cx="931.500" cy="359.500" r="3.800" fill="#e0344a"/><rect x="929.500" y="359" width="4" height="1.200" fill="#fff"/><rect x="922.800" y="364.500" width="35.400" height="3.500" fill="#dc2a1e"/><rect x="922.800" y="368" width="35.400" height="29.500" fill="#060607"/><polygon points="946.0,371.0 947.9,373.3 950.8,372.3 951.2,375.3 954.2,375.8 953.2,378.6 955.5,380.5 953.2,382.4 954.2,385.2 951.2,385.7 950.8,388.7 947.9,387.7 946.0,390.0 944.1,387.7 941.2,388.7 940.8,385.7 937.8,385.2 938.8,382.4 936.5,380.5 938.8,378.6 937.8,375.8 940.8,375.3 941.2,372.3 944.1,373.3" fill="#f3df1e"/><ellipse cx="931" cy="395.2" rx="7.199999999999999" ry="4.32" fill="#cfcfd2"/><ellipse cx="931" cy="388" rx="4.08" ry="4.8" fill="#c99583"/><path d="M926.92 386.56a4.08 4.8 0 0 1 8.16 0z" fill="#5a3c2e"/><rect x="927.4" y="387.28" width="7.199999999999999" height="1.68" fill="#40302a" opacity=".7"/><rect x="925" y="403" width="7" height="1.300" fill="#c0c3c8"/><rect x="936" y="403" width="8" height="1.300" fill="#c0c3c8"/><rect x="948" y="403" width="7" height="1.300" fill="#c0c3c8"/>
</g>
<defs><filter id="sb" x="-10%" y="-10%" width="120%" height="120%"><feGaussianBlur stdDeviation=".700"/></filter></defs>
<rect x="875.7" y="452.5" width="37.8" height="63.700000000000045" rx="1.500" fill="#2a62c8"/><clipPath id="sc877"><rect x="877.5" y="454.3" width="34.199999999999996" height="60.10000000000008"/></clipPath><g clip-path="url(#sc877)"><rect x="877.5" y="454.3" width="34.199999999999996" height="60.10000000000008" fill="#2a1812"/><g filter="url(#sb)"><rect x="875.5" y="452.3" width="38.199999999999996" height="25.242000000000033" fill="#62241a"/><rect x="875.5" y="452.3" width="38.199999999999996" height="3.6060000000000048" fill="#2a120e"/><rect x="884.34" y="462.113" width="8.549999999999999" height="6.010000000000009" fill="#a08868"/><rect x="898.704" y="456.3" width="5.129999999999999" height="6.010000000000009" fill="#7a7a60"/><rect x="893.232" y="467.52200000000005" width="4.103999999999999" height="8.414000000000012" fill="#a8262a"/><ellipse cx="886.734" cy="469.32500000000005" rx="5.814" ry="4.808000000000006" fill="#1c1214"/><ellipse cx="884.34" cy="474.13300000000004" rx="2.7359999999999998" ry="6.010000000000009" fill="#1c1214"/><ellipse cx="888.102" cy="472.93100000000004" rx="3.7619999999999996" ry="4.507500000000006" fill="#d8ac94"/><path d="M875.5 480.14300000000003 L891.18 478.34000000000003 L893.9159999999999 502.3800000000001 L875.5 502.3800000000001z" fill="#1c1a30"/><path d="M883.656 478.34000000000003 L889.812 478.34000000000003 L887.076 487.9560000000001z" fill="#c89c84"/><path d="M875.5 484.35 L885.024 483.148 L886.392 499.97600000000006 L875.5 501.17800000000005z" fill="#4a1e96"/><path d="M891.18 486.7540000000001 L900.072 478.34000000000003 L913.7 479.54200000000003 L913.7 516.4000000000001 L889.47 516.4000000000001z" fill="#38383b"/><path d="M898.02 479.54200000000003 L908.28 478.94100000000003 L902.124 489.1580000000001z" fill="#cfc6d8"/><path d="M900.756 481.345 L903.492 481.345 L901.4399999999999 488.5570000000001z" fill="#8a8590"/><ellipse cx="903.834" cy="465.71900000000005" rx="5.814" ry="3.0050000000000043" fill="#4c3024"/><ellipse cx="903.834" cy="472.93100000000004" rx="5.129999999999999" ry="6.611000000000009" fill="#d49878"/><rect x="875.5" y="501.17800000000005" width="15.389999999999999" height="18.030000000000022" fill="#222327"/></g><circle cx="894.6" cy="509.1000000000001" r="1.300" fill="#eee"/><rect x="877.5" y="513.2" width="34.199999999999996" height="1.200" fill="#0a0a0c"/></g>
<clipPath id="sc922"><rect x="922.8" y="453" width="34.6" height="62.700000000000045"/></clipPath><g clip-path="url(#sc922)"><rect x="922.8" y="453" width="34.6" height="62.700000000000045" fill="#2a1812"/><g filter="url(#sb)"><rect x="920.8" y="451" width="38.6" height="26.334000000000017" fill="#62241a"/><rect x="920.8" y="451" width="38.6" height="3.7620000000000027" fill="#2a120e"/><rect x="929.7199999999999" y="461.151" width="8.65" height="6.270000000000005" fill="#a08868"/><rect x="944.252" y="455" width="5.19" height="6.270000000000005" fill="#7a7a60"/><rect x="938.716" y="466.794" width="4.152" height="8.778000000000008" fill="#a8262a"/><ellipse cx="932.1419999999999" cy="468.675" rx="5.882000000000001" ry="5.016000000000004" fill="#1c1214"/><ellipse cx="929.7199999999999" cy="473.69100000000003" rx="2.7680000000000002" ry="6.270000000000005" fill="#1c1214"/><ellipse cx="933.526" cy="472.437" rx="3.806" ry="4.702500000000003" fill="#d8ac94"/><path d="M920.8 479.961 L936.64 478.08000000000004 L939.4079999999999 503.16 L920.8 503.16z" fill="#1c1a30"/><path d="M929.0279999999999 478.08000000000004 L935.256 478.08000000000004 L932.4879999999999 488.112z" fill="#c89c84"/><path d="M920.8 484.35 L930.4119999999999 483.096 L931.7959999999999 500.65200000000004 L920.8 501.90600000000006z" fill="#4a1e96"/><path d="M936.64 486.858 L945.636 478.08000000000004 L959.4 479.334 L959.4 517.7 L934.91 517.7z" fill="#38383b"/><path d="M943.56 479.334 L953.9399999999999 478.707 L947.712 489.36600000000004z" fill="#cfc6d8"/><path d="M946.328 481.21500000000003 L949.096 481.21500000000003 L947.02 488.73900000000003z" fill="#8a8590"/><ellipse cx="949.442" cy="464.913" rx="5.882000000000001" ry="3.1350000000000025" fill="#4c3024"/><ellipse cx="949.442" cy="472.437" rx="5.19" ry="6.897000000000005" fill="#d49878"/><rect x="920.8" y="501.90600000000006" width="15.57" height="18.810000000000013" fill="#222327"/></g><rect x="934.5999999999999" y="509.90000000000003" width="11" height="3.400" rx="1.700" fill="#fff"/><rect x="922.8" y="514.5" width="34.6" height="1.200" fill="#0a0a0c"/></g>
<clipPath id="sc968"><rect x="968.9" y="453" width="35.1" height="62.700000000000045"/></clipPath><g clip-path="url(#sc968)"><rect x="968.9" y="453" width="35.1" height="62.700000000000045" fill="#2a1812"/><g filter="url(#sb)"><rect x="966.9" y="451" width="39.1" height="26.334000000000017" fill="#62241a"/><rect x="966.9" y="451" width="39.1" height="3.7620000000000027" fill="#2a120e"/><rect x="975.92" y="461.151" width="8.775" height="6.270000000000005" fill="#a08868"/><rect x="990.662" y="455" width="5.265" height="6.270000000000005" fill="#7a7a60"/><rect x="985.0459999999999" y="466.794" width="4.212" height="8.778000000000008" fill="#a8262a"/><ellipse cx="978.377" cy="468.675" rx="5.9670000000000005" ry="5.016000000000004" fill="#1c1214"/><ellipse cx="975.92" cy="473.69100000000003" rx="2.8080000000000003" ry="6.270000000000005" fill="#1c1214"/><ellipse cx="979.781" cy="472.437" rx="3.861" ry="4.702500000000003" fill="#d8ac94"/><path d="M966.9 479.961 L982.9399999999999 478.08000000000004 L985.7479999999999 503.16 L966.9 503.16z" fill="#1c1a30"/><path d="M975.218 478.08000000000004 L981.536 478.08000000000004 L978.728 488.112z" fill="#c89c84"/><path d="M966.9 484.35 L976.622 483.096 L978.026 500.65200000000004 L966.9 501.90600000000006z" fill="#4a1e96"/><path d="M982.9399999999999 486.858 L992.066 478.08000000000004 L1006.0 479.334 L1006.0 517.7 L981.185 517.7z" fill="#38383b"/><path d="M989.9599999999999 479.334 L1000.49 478.707 L994.172 489.36600000000004z" fill="#cfc6d8"/><path d="M992.768 481.21500000000003 L995.576 481.21500000000003 L993.47 488.73900000000003z" fill="#8a8590"/><ellipse cx="995.927" cy="464.913" rx="5.9670000000000005" ry="3.1350000000000025" fill="#4c3024"/><ellipse cx="995.927" cy="472.437" rx="5.265" ry="6.897000000000005" fill="#d49878"/><rect x="966.9" y="501.90600000000006" width="15.795000000000002" height="18.810000000000013" fill="#222327"/></g><rect x="980.9499999999999" y="509.90000000000003" width="11" height="3.400" rx="1.700" fill="#fff"/><rect x="968.9" y="514.5" width="35.1" height="1.200" fill="#0a0a0c"/></g>
</svg>

<div class="a" style="left:876px;top:424px;width:132px;height:1px;background:#e4e6ea"></div>
<div class="t b" style="left:876.200px;top:437px;font-size:8.350px;color:#2a2d31">Stories</div>
<!-- tooltip -->
<div class="a" style="left:880px;top:257.500px;width:98px;height:12.500px;background:rgba(250,250,251,.800);border-radius:2px"></div>
<div class="t" style="left:884px;top:259.500px;font-size:8.750px;color:#9a9da3">Facebook Video Feeds</div>
<svg style="left:885.500px;top:274px" width="10" height="11" viewBox="0 0 10 11"><path d="M2.800 5V1.300a.900 .900 0 0 1 1.800 0V4.200l3.300.700a1.200 1.200 0 0 1 1 1.300L8.500 9.500a1 1 0 0 1-1 .900H4.300L1 7a.900 .900 0 0 1 1.300-1.200z" fill="#fff" stroke="#222" stroke-width=".800" stroke-linejoin="round"/></svg>


<div class="a" style="left:390px;top:519.500px;width:634px;height:56.500px;background:#fff;box-shadow:0 -1px 2px rgba(0,0,0,.060)"></div>
<div class="t" style="left:397.500px;top:529.500px;font-size:8.860px;color:#1c1e21">By clicking the "Publish" button, you agree to Facebook's <span style="color:#385898">Terms and Advertising Guidelines</span>.</div>
<div class="a" style="left:398.500px;top:546.500px;width:42px;height:21.500px;border-radius:3px;background:#e8eaed"></div>
<div class="t" style="left:408.300px;top:553px;font-size:8.800px;color:#2a2d31">Close</div>
<div class="a" style="left:888px;top:546px;width:72.500px;height:22px;border-radius:3px;background:#eeeff0"></div>
<div class="t" style="left:898.500px;top:553px;font-size:8.800px;color:#adb0b4">Discard Draft</div>
<div class="a" style="left:966px;top:546px;width:50px;height:22px;border-radius:3px;background:#86e072"></div>
<div class="t b" style="left:975.500px;top:553px;font-size:8.600px;color:#f3fbef">Publish</div>


<svg style="left:73px;top:411.500px" width="131" height="131" viewBox="0 0 131 131">
<defs><clipPath id="wc"><circle cx="65.500" cy="65.500" r="65"/></clipPath><filter id="wb" x="-10%" y="-10%" width="120%" height="120%"><feGaussianBlur stdDeviation="1.600"/></filter></defs>
<g clip-path="url(#wc)">
<rect width="131" height="131" fill="#0a0a0c"/>
<g filter="url(#wb)">
 <rect x="112" y="20" width="26" height="54" fill="#c9c1aa"/>
 <rect x="108" y="71" width="30" height="11" fill="#e4e2de"/>
 <rect x="51" y="75" width="10" height="13" rx="3" fill="#d6d6d8"/>
 <rect x="13" y="99" width="16" height="11" fill="#3e3e40"/>
 <path d="M58 30 Q60 8 90 9 Q116 12 117 40 L116 60 L104 58 L100 30 L70 26z" fill="#4c3a2e"/>
 <path d="M57 40 Q56 24 72 23 L98 24 Q108 30 109 50 L110 74 Q108 96 98 104 Q84 112 72 104 Q60 92 57 74z" fill="#d9a08e"/>
 <path d="M60 30 Q64 24 84 25 Q98 26 104 34 L104 46 L60 44z" fill="#dfaa96"/>
 <ellipse cx="112" cy="61" rx="4.500" ry="9" fill="#d09482"/>
 <path d="M62 78 Q70 74 84 76 Q100 78 108 72 Q108 96 98 104 Q84 112 72 104 Q64 96 62 78z" fill="#b8948a"/>
 <rect x="62" y="55" width="9" height="2.500" fill="#6a4a40"/>
 <rect x="81" y="55" width="12" height="2.500" fill="#6a4a40"/>
 <path d="M72 58 L68 74 L76 76z" fill="#cc8e7e"/>
 <rect x="67" y="84" width="12" height="3" rx="1.500" fill="#8a4448"/>
 <path d="M-5 140 L20 112 L42 98 L54 86 L66 98 L80 106 L98 102 L112 80 L135 84 L140 140z" fill="#0c0c0e"/>
</g>
</g></svg>

</body></html>
